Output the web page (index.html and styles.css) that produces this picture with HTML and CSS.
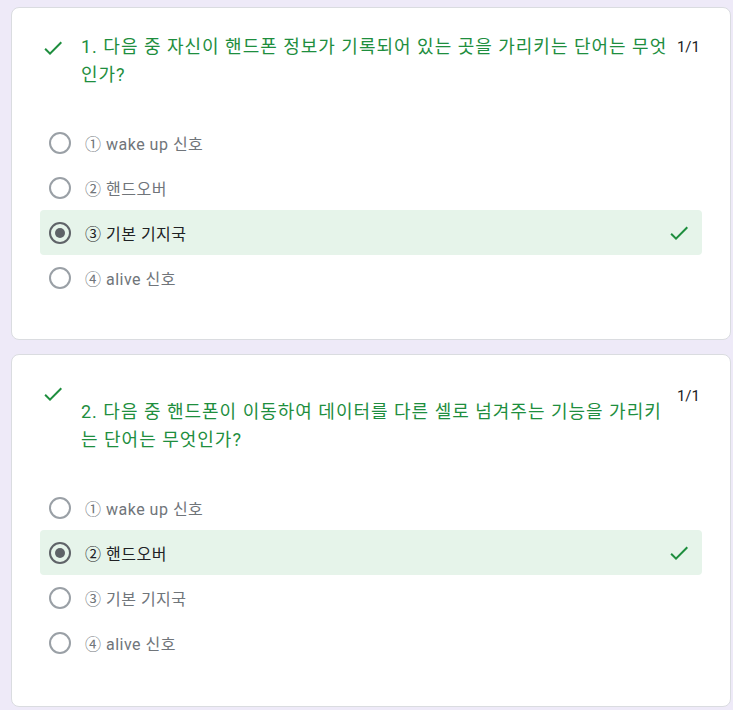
FILE: index.html
```html
<!DOCTYPE html>
<html lang="ko">
<head>
<meta charset="utf-8">
<link rel="stylesheet" href="styles.css">
</head>
<body>
<div class="page">
  <section class="card">
    <div class="q-head">
      <svg class="q-check" viewBox="0 0 24 24" width="24" height="24"><path d="M9 16.17L4.83 12l-1.42 1.41L9 19 21 7l-1.41-1.41z"/></svg>
      <div class="q-title">1. 다음 중 자신이 핸드폰 정보가 기록되어 있는 곳을 가리키는 단어는 무엇인가?</div>
      <div class="q-points">1/1</div>
    </div>
    <ul class="options">
      <li class="option"><span class="radio"></span><span class="opt-text">① wake up 신호</span></li>
      <li class="option"><span class="radio"></span><span class="opt-text">② 핸드오버</span></li>
      <li class="option option-correct"><span class="radio radio-on"></span><span class="opt-text">③ 기본 기지국</span>
        <svg class="opt-check" viewBox="0 0 24 24" width="24" height="24"><path d="M9 16.17L4.83 12l-1.42 1.41L9 19 21 7l-1.41-1.41z"/></svg></li>
      <li class="option"><span class="radio"></span><span class="opt-text">④ alive 신호</span></li>
    </ul>
  </section>
  <section class="card">
    <div class="q-head q-head-drop">
      <svg class="q-check" viewBox="0 0 24 24" width="24" height="24"><path d="M9 16.17L4.83 12l-1.42 1.41L9 19 21 7l-1.41-1.41z"/></svg>
      <div class="q-title">2. 다음 중 핸드폰이 이동하여 데이터를 다른 셀로 넘겨주는 기능을 가리키는 단어는 무엇인가?</div>
      <div class="q-points">1/1</div>
    </div>
    <ul class="options">
      <li class="option"><span class="radio"></span><span class="opt-text">① wake up 신호</span></li>
      <li class="option option-correct"><span class="radio radio-on"></span><span class="opt-text">② 핸드오버</span>
        <svg class="opt-check" viewBox="0 0 24 24" width="24" height="24"><path d="M9 16.17L4.83 12l-1.42 1.41L9 19 21 7l-1.41-1.41z"/></svg></li>
      <li class="option"><span class="radio"></span><span class="opt-text">③ 기본 기지국</span></li>
      <li class="option"><span class="radio"></span><span class="opt-text">④ alive 신호</span></li>
    </ul>
  </section>
</div>
</body>
</html>
```

FILE: styles.css
```css
html, body {
  margin: 0;
  padding: 0;
  background: #eeeaf8;
}
body {
  font-family: Roboto, "Noto Sans CJK KR", sans-serif;
  color: #202124;
}
.page {
  display: flex;
  flex-direction: column;
  gap: 14px;
  padding: 7px 2px 4px 11px;
}
.card {
  background: #fff;
  border: 1px solid #dadce0;
  border-radius: 8px;
  padding: 25px 28px 39px 28px;
}
.card + .card {
  padding-bottom: 41px;
}
.q-head {
  display: flex;
  align-items: flex-start;
}
.q-check {
  flex: none;
  fill: #1e8e3e;
  margin: 3px 16px 0 1px;
}
.q-title {
  flex: 1;
  font-size: 18px;
  line-height: 28px;
  letter-spacing: 1px;
  color: #1e8e3e;
  margin-right: 5px;
}
.q-points {
  flex: none;
  font-size: 15px;
  line-height: 28px;
  color: #202124;
  margin-right: 2px;
}
.q-head-drop .q-check { margin-top: 2px; }
.q-head-drop .q-title { margin-top: 18px; }
.q-head-drop .q-points { margin-top: 2px; }
.options {
  list-style: none;
  margin: 31px 0 0 0;
  padding: 0;
}
.option {
  display: flex;
  align-items: center;
  height: 45px;
  padding: 0 11px 0 9px;
  border-radius: 4px;
}
.option-correct {
  background: #e6f4ea;
}
.radio {
  flex: none;
  width: 22px;
  height: 22px;
  box-sizing: border-box;
  border: 2px solid #9aa0a6;
  border-radius: 50%;
  margin-right: 14px;
  display: flex;
  align-items: center;
  justify-content: center;
}
.radio-on {
  border-color: #5f6368;
}
.radio-on::after {
  content: "";
  width: 10px;
  height: 10px;
  border-radius: 50%;
  background: #5f6368;
}
.opt-text {
  flex: 1;
  font-size: 16px;
  letter-spacing: 0.5px;
  color: #70757a;
}
.option-correct .opt-text {
  color: #202124;
}
.opt-check {
  flex: none;
  fill: #1e8e3e;
}
```
